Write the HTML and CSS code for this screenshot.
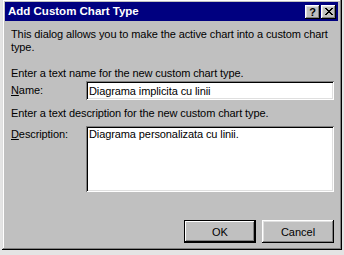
FILE: index.html
```html
<!DOCTYPE html>
<html lang="en">
<head>
  <meta charset="UTF-8" />
  <meta name="viewport" content="width=device-width, initial-scale=1.0" />
  <title>Add Custom Chart Type</title>
  <link rel="stylesheet" href="styles.css">
</head>
<body>
<div class="dialog">
  <div class="titlebar">
    <span class="title">Add Custom Chart Type</span>
    <div class="caption-btns">
      <span class="cap-btn help">?</span>
      <span class="cap-btn close">
        <svg width="8" height="7" viewBox="0 0 8 7">
          <path d="M0 0h2v1h1v1h2v-1h1v-1h2v1h-1v1h-1v1h-1v1h1v1h1v1h1v1h-2v-1h-1v-1h-2v1h-1v1h-2v-1h1v-1h1v-1h1v-1h-1v-1h-1v-1h-1z" fill="#000"/>
        </svg>
      </span>
    </div>
  </div>

  <div class="content">
    <p class="intro">This dialog allows you to make the active chart into a custom chart type.</p>

    <p class="hint">Enter a text name for the new custom chart type.</p>
    <div class="field name-field">
      <label for="chart-name"><u>N</u>ame:</label>
      <input type="text" id="chart-name" value="Diagrama implicita cu linii">
    </div>

    <p class="hint hint-desc">Enter a text description for the new custom chart type.</p>
    <div class="field desc-field">
      <label for="chart-desc"><u>D</u>escription:</label>
      <textarea id="chart-desc">Diagrama personalizata cu linii.</textarea>
    </div>

    <div class="buttons">
      <button class="btn btn-default">OK</button>
      <button class="btn">Cancel</button>
    </div>
  </div>
</div>
</body>
</html>
```

FILE: styles.css
```css
* {
  box-sizing: border-box;
  margin: 0;
  padding: 0;
}

body {
  background-color: #e4e4e4;
  font-family: 'Liberation Sans', Arial, sans-serif;
  font-size: 11px;
  color: #000;
  overflow: hidden;
}

.dialog {
  width: 340px;
  height: 251px;
  margin: -1px 0 0 2px;
  padding: 3px 4px 0 3px;
  background-color: #c0c0c0;
  box-shadow:
    inset -1px -1px #000,
    inset 1px 1px #dfdfdf,
    inset -2px -2px #808080,
    inset 2px 2px #fff;
}

.titlebar {
  height: 19px;
  background-color: #000080;
  color: white;
  display: flex;
  align-items: center;
  justify-content: space-between;
  padding: 0 2px 0 3px;
}

.title {
  font-weight: bold;
  font-size: 11.5px;
  line-height: 19px;
}

.caption-btns {
  display: flex;
  gap: 1px;
}

.cap-btn {
  width: 15px;
  height: 14px;
  background-color: #c0c0c0;
  color: #000;
  display: flex;
  align-items: center;
  justify-content: center;
  font-weight: bold;
  font-size: 11px;
  box-shadow:
    inset -1px -1px #000,
    inset 1px 1px #fff,
    inset -2px -2px #808080,
    inset 2px 2px #dfdfdf;
}

.content {
  padding: 7px 0 0 6px;
  letter-spacing: -0.1px;
}

.intro,
.hint {
  line-height: 13px;
}

.intro {
  margin-bottom: 13px;
  padding-right: 4px;
}

.field {
  display: flex;
  align-items: flex-start;
}

.field label {
  width: 75px;
  flex-shrink: 0;
}

.name-field {
  margin-top: 1px;
}

.name-field label {
  padding-top: 3px;
}

.desc-field label {
  padding-top: 2px;
}

.hint-desc {
  margin-top: 7px;
}

.desc-field {
  margin-top: 6px;
}

input,
textarea {
  font-family: 'Liberation Sans', Arial, sans-serif;
  font-size: 11px;
  letter-spacing: -0.1px;
  color: #000;
  background: #fff;
  border: none;
  outline: none;
  width: 248px;
  box-shadow:
    inset 1px 1px #808080,
    inset -1px -1px #fff,
    inset 2px 2px #000,
    inset -2px -2px #dfdfdf;
}

input {
  height: 19px;
  padding: 1px 3px 0 3px;
}

textarea {
  height: 66px;
  padding: 2px 3px;
  resize: none;
  overflow: hidden;
  line-height: 13px;
}

.buttons {
  display: flex;
  justify-content: flex-end;
  gap: 6px;
  margin-top: 28px;
  padding-right: 4px;
}

.btn {
  width: 72px;
  height: 23px;
  background-color: #c0c0c0;
  border: none;
  font-family: 'Liberation Sans', Arial, sans-serif;
  font-size: 11px;
  color: #000;
  box-shadow:
    inset -1px -1px #000,
    inset 1px 1px #fff,
    inset -2px -2px #808080,
    inset 2px 2px #dfdfdf;
}

.btn-default {
  box-shadow:
    inset 0 0 0 1px #000,
    inset -2px -2px #000,
    inset 2px 2px #fff,
    inset -3px -3px #808080;
}
```
